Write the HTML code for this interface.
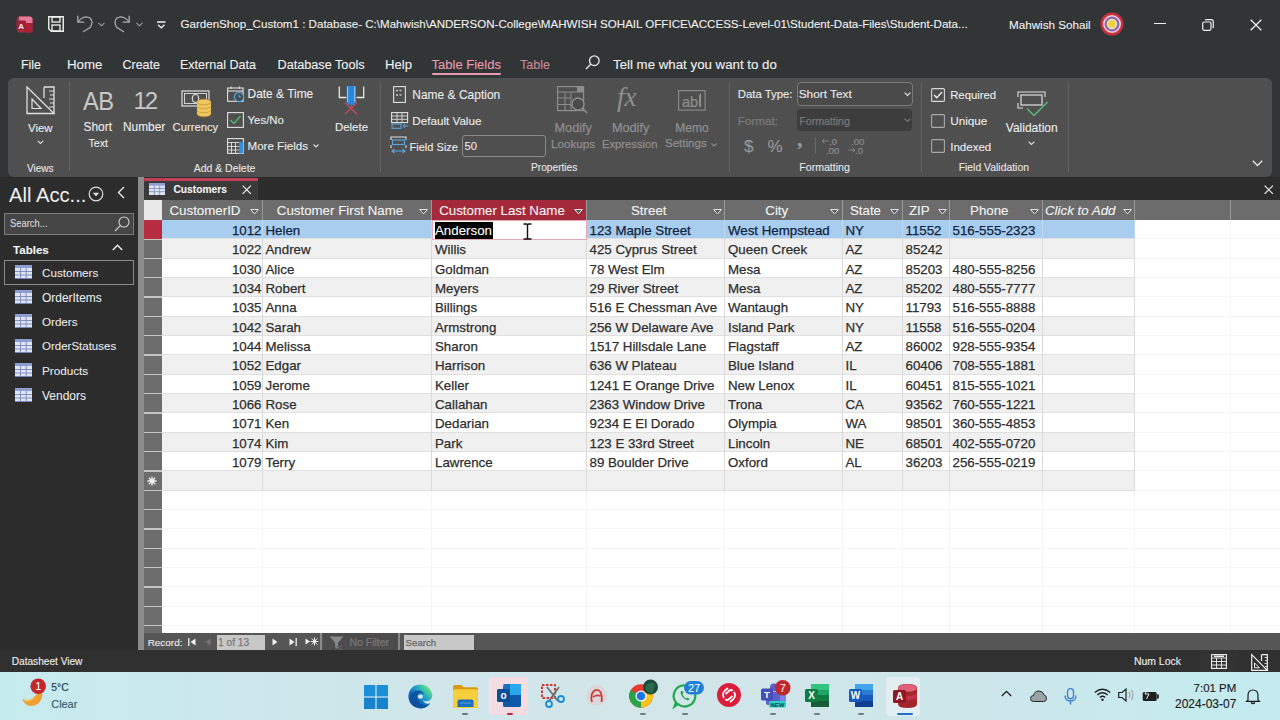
<!DOCTYPE html>
<html><head><meta charset="utf-8">
<style>
*{margin:0;padding:0;box-sizing:border-box}
html,body{width:1280px;height:720px;overflow:hidden;background:#2b2b2b;font-family:"Liberation Sans",sans-serif;}
.a{position:absolute;white-space:nowrap;line-height:1}
svg.a{overflow:visible}
</style></head><body>
<div class="a" style="left:0px;top:0px;width:1280px;height:178px;background:#323535;"></div>
<div class="a" style="left:8px;top:78px;width:1264px;height:99px;background:#4f4f4f;border-radius:6px"></div>
<div class="a" style="left:0px;top:177px;width:138px;height:473px;background:#2c2c2c;"></div>
<div class="a" style="left:138px;top:177px;width:6px;height:473px;background:#8c8c8c;"></div>
<div class="a" style="left:144px;top:177px;width:1136px;height:23px;background:#2c2c2c;"></div>
<svg class="a" style="left:15.5px;top:15.5px" width="17" height="17" viewBox="0 0 17 17"><rect x="1" y="0.5" width="15.5" height="16" rx="3" fill="#b02a40"/><path d="M3 0.5 H13.5 Q16.5 0.5 16.5 3.5 V7 Q10 9 3.5 7Z" fill="#e57b98"/><rect x="9" y="7" width="7.5" height="9.5" fill="#a72238"/><rect x="0.5" y="4.5" width="9.5" height="10" rx="1" fill="#a01f36"/><text x="5.2" y="12.8" font-size="8" font-weight="bold" fill="#fbe8ee" text-anchor="middle" font-family="Liberation Sans">A</text></svg>
<svg class="a" style="left:48px;top:16px" width="16" height="16" viewBox="0 0 16 16"><path d="M0.75 0.75H15.25V15.25H3.2L0.75 12.8Z" fill="none" stroke="#f0f0f0" stroke-width="1.4"/><rect x="4" y="1" width="8" height="5" fill="none" stroke="#f0f0f0" stroke-width="1.3"/><rect x="4" y="9" width="8" height="6" fill="none" stroke="#f0f0f0" stroke-width="1.3"/></svg>
<svg class="a" style="left:76px;top:15px" width="17" height="17" viewBox="0 0 17 17"><path d="M1.8 0.8V7.2H8.3" fill="none" stroke="#a8a8a8" stroke-width="1.3"/><path d="M2 7 Q5.5 2.2 10 1.9 Q15.5 2 16 7.5 Q16 10 14 12.5 L7 17" fill="none" stroke="#a8a8a8" stroke-width="1.3"/></svg>
<svg class="a" style="left:97.5px;top:21.5px" width="7" height="5" viewBox="0 0 7 5"><path d="M0.5 0.8L3.5 3.8L6.5 0.8" fill="none" stroke="#a0a0a0" stroke-width="1.1"/></svg>
<svg class="a" style="left:114px;top:15px" width="17" height="17" viewBox="0 0 17 17"><path d="M15.2 0.8V7.2H8.7" fill="none" stroke="#a8a8a8" stroke-width="1.3"/><path d="M15 7 Q11.5 2.2 7 1.9 Q1.5 2 1 7.5 Q1 10 3 12.5 L10 17" fill="none" stroke="#a8a8a8" stroke-width="1.3"/></svg>
<svg class="a" style="left:136px;top:21.5px" width="7" height="5" viewBox="0 0 7 5"><path d="M0.5 0.8L3.5 3.8L6.5 0.8" fill="none" stroke="#a0a0a0" stroke-width="1.1"/></svg>
<svg class="a" style="left:157px;top:20.5px" width="8.5" height="8" viewBox="0 0 8.5 8"><path d="M0 1H8.5" stroke="#e8e8e8" stroke-width="1.6"/><path d="M1 3.8L4.25 6.8L7.5 3.8" fill="none" stroke="#e8e8e8" stroke-width="1.5"/></svg>
<div class="a" style="left:180.50px;top:19.20px;font-size:11.58px;color:#f0f0f0;-webkit-text-stroke:0.1px #f0f0f0;">GardenShop_Custom1 : Database- C:\Mahwish\ANDERSON-College\MAHWISH SOHAIL OFFICE\ACCESS-Level-01\Student-Data-Files\Student-Data...</div>
<div class="a" style="left:1009.00px;top:19.42px;font-size:11.67px;color:#f0f0f0;-webkit-text-stroke:0.1px #f0f0f0;">Mahwish Sohail</div>
<svg class="a" style="left:1100px;top:12px" width="24" height="24" viewBox="0 0 24 24"><circle cx="12" cy="12" r="11.5" fill="#c9303f"/><circle cx="12" cy="12" r="9" fill="#f2d2dc"/><circle cx="12" cy="12" r="7.5" fill="#8a6aa8"/><circle cx="12" cy="12" r="5.2" fill="#f0e6f0"/><circle cx="12" cy="12" r="4" fill="#f0d23a"/></svg>
<div class="a" style="left:1154px;top:23px;width:12px;height:1.3px;background:#f0f0f0;"></div>
<svg class="a" style="left:1202px;top:19px" width="12" height="12" viewBox="0 0 12 12"><rect x="0.7" y="3" width="8.3" height="8.3" rx="1.5" fill="none" stroke="#f0f0f0" stroke-width="1.2"/><path d="M3 1.2 Q3.5 0.7 5 0.7 H9 Q11.3 0.7 11.3 3 V7 Q11.3 8.5 10.8 9" fill="none" stroke="#f0f0f0" stroke-width="1.2"/></svg>
<svg class="a" style="left:1250px;top:19px" width="12" height="12" viewBox="0 0 12 12"><path d="M0.7 0.7L11.3 11.3M11.3 0.7L0.7 11.3" stroke="#f0f0f0" stroke-width="1.3"/></svg>
<div class="a" style="left:21.00px;top:58.79px;font-size:12.41px;color:#f0f0f0;-webkit-text-stroke:0.1px #f0f0f0;">File</div>
<div class="a" style="left:67.00px;top:58.03px;font-size:13.31px;color:#f0f0f0;-webkit-text-stroke:0.1px #f0f0f0;">Home</div>
<div class="a" style="left:122.50px;top:58.73px;font-size:12.49px;color:#f0f0f0;-webkit-text-stroke:0.1px #f0f0f0;">Create</div>
<div class="a" style="left:180.00px;top:58.68px;font-size:12.54px;color:#f0f0f0;-webkit-text-stroke:0.1px #f0f0f0;">External Data</div>
<div class="a" style="left:277.50px;top:58.57px;font-size:12.68px;color:#f0f0f0;-webkit-text-stroke:0.1px #f0f0f0;">Database Tools</div>
<div class="a" style="left:385.00px;top:58.19px;font-size:13.13px;color:#f0f0f0;-webkit-text-stroke:0.1px #f0f0f0;">Help</div>
<div class="a" style="left:431.50px;top:58.27px;font-size:13.03px;color:#e79bb2;-webkit-text-stroke:0.1px #e79bb2;">Table Fields</div>
<div class="a" style="left:431.5px;top:73px;width:69.5px;height:2px;background:#e79bb2;border-radius:1px"></div>
<div class="a" style="left:520.00px;top:58.68px;font-size:12.55px;color:#c88a9e;-webkit-text-stroke:0.1px #c88a9e;">Table</div>
<svg class="a" style="left:585px;top:55px" width="15" height="15" viewBox="0 0 15 15"><circle cx="9.3" cy="5.7" r="4.8" fill="none" stroke="#e8e8e8" stroke-width="1.3"/><path d="M5.8 9.2L1 14" stroke="#e8e8e8" stroke-width="1.4"/></svg>
<div class="a" style="left:613.00px;top:58.05px;font-size:13.29px;color:#f0f0f0;-webkit-text-stroke:0.1px #f0f0f0;">Tell me what you want to do</div>
<svg class="a" style="left:26px;top:86px" width="30" height="29" viewBox="0 0 30 29"><path d="M1 1 L28 27.5 H1 Z" fill="none" stroke="#e0e0e0" stroke-width="1.3"/><path d="M6 13 L15 22.5 H6Z" fill="none" stroke="#e0e0e0" stroke-width="1.2"/><path d="M18 1 H28 V27.5" fill="none" stroke="#e0e0e0" stroke-width="1.3"/><path d="M18 1 V12" stroke="#e0e0e0" stroke-width="1.3"/><path d="M23 5H28M24 9H28M23 13H28M24 17H28M23 21H28" stroke="#e0e0e0" stroke-width="1"/></svg>
<div class="a" style="left:28.00px;top:123.35px;font-size:11.4px;color:#ececec;-webkit-text-stroke:0.1px #ececec;">View</div>
<svg class="a" style="left:37px;top:140px" width="7" height="5" viewBox="0 0 7 5"><path d="M0.8 0.8L3.5 3.5L6.2 0.8" fill="none" stroke="#e0e0e0" stroke-width="1.1"/></svg>
<div class="a" style="left:27.00px;top:163.53px;font-size:10.0px;color:#e6e6e6;-webkit-text-stroke:0.1px #e6e6e6;">Views</div>
<div class="a" style="left:69px;top:82px;width:1px;height:89px;background:#646464;"></div>
<div class="a" style="left:83px;top:88.5px;font-size:25px;color:#c8c8c8;font-weight:normal;letter-spacing:-0.5px;transform:scaleX(0.95);transform-origin:0 0">AB</div>
<div class="a" style="left:133.5px;top:88.5px;font-size:24px;color:#c8c8c8;letter-spacing:-2px">12</div>
<div class="a" style="left:83.50px;top:121.91px;font-size:11.92px;color:#ececec;-webkit-text-stroke:0.1px #ececec;">Short</div>
<div class="a" style="left:88.40px;top:137.75px;font-size:10.69px;color:#ececec;-webkit-text-stroke:0.1px #ececec;">Text</div>
<div class="a" style="left:123.00px;top:121.94px;font-size:11.89px;color:#ececec;-webkit-text-stroke:0.1px #ececec;">Number</div>
<svg class="a" style="left:181px;top:90px" width="32" height="28" viewBox="0 0 32 28"><rect x="1" y="1" width="27" height="15" fill="none" stroke="#e0e0e0" stroke-width="1.2"/><rect x="3.5" y="3.5" width="22" height="10" fill="none" stroke="#e0e0e0" stroke-width="0.9"/><ellipse cx="14.5" cy="8.5" rx="3.2" ry="4" fill="none" stroke="#e0e0e0" stroke-width="1.2"/><g fill="#f0c75e" stroke="#b08a2a" stroke-width="0.6"><ellipse cx="23" cy="24" rx="7" ry="2.8"/><rect x="16" y="19" width="14" height="5" stroke="none"/><ellipse cx="23" cy="20" rx="7" ry="2.8"/><rect x="16" y="15" width="14" height="5" stroke="none"/><ellipse cx="23" cy="16" rx="7" ry="2.8"/><rect x="16" y="11" width="14" height="5" stroke="none"/><ellipse cx="23" cy="12" rx="7" ry="2.8"/></g></svg>
<div class="a" style="left:172.50px;top:122.44px;font-size:11.29px;color:#ececec;-webkit-text-stroke:0.1px #ececec;">Currency</div>
<svg class="a" style="left:227px;top:86px" width="18" height="16" viewBox="0 0 18 16"><rect x="0.6" y="2" width="15.5" height="13.3" fill="none" stroke="#e0e0e0" stroke-width="1.1"/><path d="M0.6 5H16" stroke="#e0e0e0" stroke-width="1.1"/><path d="M4 0.5V3M12.5 0.5V3" stroke="#e0e0e0" stroke-width="1.1"/><circle cx="12" cy="11" r="4.6" fill="#4a4a4a" stroke="#5aa7e6" stroke-width="1.2"/><path d="M12 8.5V11H14" fill="none" stroke="#5aa7e6" stroke-width="1"/></svg>
<div class="a" style="left:247.50px;top:88.88px;font-size:11.96px;color:#ececec;-webkit-text-stroke:0.1px #ececec;">Date & Time</div>
<svg class="a" style="left:227px;top:112px" width="17" height="16" viewBox="0 0 17 16"><rect x="0.6" y="0.6" width="15.8" height="14.8" fill="none" stroke="#e0e0e0" stroke-width="1.1"/><path d="M3.5 8L7 11.5L13.5 4" fill="none" stroke="#4fb86a" stroke-width="1.5"/></svg>
<div class="a" style="left:247.50px;top:115.31px;font-size:11.45px;color:#ececec;-webkit-text-stroke:0.1px #ececec;">Yes/No</div>
<svg class="a" style="left:227px;top:138px" width="17" height="16" viewBox="0 0 17 16"><rect x="0.6" y="0.6" width="15.8" height="14.8" fill="none" stroke="#e0e0e0" stroke-width="1.1"/><path d="M0.6 4.5H16.4M0.6 8.5H12M0.6 12H12M4.5 4.5V15.4M8.5 4.5V15.4" stroke="#e0e0e0" stroke-width="0.9"/><rect x="12" y="4" width="4.4" height="11.4" fill="#2f8ee0"/></svg>
<div class="a" style="left:247.50px;top:141.20px;font-size:11.58px;color:#ececec;-webkit-text-stroke:0.1px #ececec;">More Fields</div>
<svg class="a" style="left:313px;top:144px" width="6" height="4" viewBox="0 0 6 4"><path d="M0.5 0.5L3 3L5.5 0.5" fill="none" stroke="#e0e0e0" stroke-width="1.1"/></svg>
<svg class="a" style="left:338px;top:86px" width="27" height="28" viewBox="0 0 27 28"><path d="M1.3 0.5V11.5H8.5M25.7 0.5V11.5H18.5" fill="none" stroke="#e6e6e6" stroke-width="1.3"/><path d="M8.7 0V17L13.2 20L17.7 17V0Z" fill="#2a86d8"/><path d="M9.6 0.5V16M16.8 0.5V16" stroke="#9fd0f8" stroke-width="1"/><path d="M7 16.5L19 28M19 16.5L7 28" stroke="#d9485e" stroke-width="1.4" opacity="0.9"/></svg>
<div class="a" style="left:335.00px;top:121.83px;font-size:11.42px;color:#ececec;-webkit-text-stroke:0.1px #ececec;">Delete</div>
<div class="a" style="left:193.70px;top:163.64px;font-size:10.47px;color:#e6e6e6;-webkit-text-stroke:0.1px #e6e6e6;">Add & Delete</div>
<div class="a" style="left:379.5px;top:82px;width:1px;height:90px;background:#646464;"></div>
<svg class="a" style="left:393px;top:86px" width="14" height="17" viewBox="0 0 14 17"><rect x="0.6" y="0.6" width="11.8" height="15.8" fill="none" stroke="#e0e0e0" stroke-width="1.1"/><path d="M3 4.5H5M3 9H5M6.5 4.5H8.5M6.5 9H8.5" stroke="#c8c8c8" stroke-width="1.6"/></svg>
<div class="a" style="left:412.30px;top:89.15px;font-size:11.99px;color:#ececec;-webkit-text-stroke:0.1px #ececec;">Name & Caption</div>
<svg class="a" style="left:391px;top:112px" width="18" height="17" viewBox="0 0 18 17"><rect x="0.6" y="0.6" width="16" height="10" fill="none" stroke="#e0e0e0" stroke-width="1.1"/><path d="M0.6 4H16.6M0.6 7.3H16.6M6 0.6V10.6M11 0.6V10.6" stroke="#e0e0e0" stroke-width="0.9"/><rect x="1" y="12" width="9" height="4.3" fill="none" stroke="#5aa7e6" stroke-width="1"/><path d="M17 14H12M14 12L12 14L14 16" fill="none" stroke="#5aa7e6" stroke-width="1"/></svg>
<div class="a" style="left:412.30px;top:115.12px;font-size:11.67px;color:#ececec;-webkit-text-stroke:0.1px #ececec;">Default Value</div>
<svg class="a" style="left:390px;top:136px" width="17" height="17" viewBox="0 0 17 17"><path d="M1 4V1H16V4M1 9V12M16 9V12" fill="none" stroke="#e0e0e0" stroke-width="1.1"/><rect x="2.5" y="4" width="12" height="4.5" fill="none" stroke="#5aa7e6" stroke-width="1.1"/><path d="M2 15H15M4.5 13L2 15L4.5 17M12.5 13L15 15L12.5 17" fill="none" stroke="#5aa7e6" stroke-width="1.1"/></svg>
<div class="a" style="left:409.50px;top:141.65px;font-size:11.05px;color:#ececec;-webkit-text-stroke:0.1px #ececec;">Field Size</div>
<div class="a" style="left:462px;top:135px;width:83.5px;height:21.7px;background:transparent;border:1px solid #8a8a8a;border-radius:3px"></div>
<div class="a" style="left:464.50px;top:141.49px;font-size:11.24px;color:#ececec;-webkit-text-stroke:0.1px #ececec;">50</div>
<svg class="a" style="left:557px;top:86px" width="32" height="31" viewBox="0 0 32 31"><rect x="0.6" y="0.6" width="26" height="24" fill="none" stroke="#8e8e8e" stroke-width="1.2"/><path d="M0.6 6H26.6M0.6 12H14M0.6 18.5H14M8 6V24.6M14 6V24.6" stroke="#8e8e8e" stroke-width="1"/><rect x="20" y="1" width="6.5" height="5" fill="#8e8e8e"/><circle cx="21" cy="18" r="6" fill="#4a4a4a" stroke="#8e8e8e" stroke-width="1.3"/><path d="M25.3 22.3L30 27" stroke="#8e8e8e" stroke-width="1.6"/></svg>
<div class="a" style="left:554.50px;top:121.72px;font-size:12.73px;color:#8e8e8e;-webkit-text-stroke:0.25px #8e8e8e;">Modify</div>
<div class="a" style="left:551.00px;top:138.15px;font-size:11.64px;color:#8e8e8e;-webkit-text-stroke:0.25px #8e8e8e;">Lookups</div>
<div class="a" style="left:617px;top:84px;font-size:27px;color:#8e8e8e;font-family:'Liberation Serif',serif;font-style:italic">fx</div>
<div class="a" style="left:612.00px;top:121.78px;font-size:12.66px;color:#8e8e8e;-webkit-text-stroke:0.25px #8e8e8e;">Modify</div>
<div class="a" style="left:602.00px;top:138.50px;font-size:11.22px;color:#8e8e8e;-webkit-text-stroke:0.25px #8e8e8e;">Expression</div>
<svg class="a" style="left:678px;top:90px" width="28" height="21" viewBox="0 0 28 21"><rect x="0.6" y="0.6" width="26.5" height="19.5" fill="none" stroke="#8e8e8e" stroke-width="1.1"/><path d="M22.5 3.5V17" stroke="#8e8e8e" stroke-width="1.1"/></svg>
<div class="a" style="left:682.00px;top:94.73px;font-size:14.5px;color:#8e8e8e;-webkit-text-stroke:0.25px #8e8e8e;">ab</div>
<div class="a" style="left:699px;top:95px;width:1.1px;height:12px;background:#8e8e8e;"></div>
<div class="a" style="left:675.30px;top:122.33px;font-size:12.02px;color:#8e8e8e;-webkit-text-stroke:0.25px #8e8e8e;">Memo</div>
<div class="a" style="left:665.00px;top:138.23px;font-size:11.54px;color:#8e8e8e;-webkit-text-stroke:0.25px #8e8e8e;">Settings</div>
<svg class="a" style="left:711px;top:143px" width="6" height="4" viewBox="0 0 6 4"><path d="M0.5 0.5L3 3L5.5 0.5" fill="none" stroke="#8e8e8e" stroke-width="1.1"/></svg>
<div class="a" style="left:531.00px;top:162.68px;font-size:10.18px;color:#e6e6e6;-webkit-text-stroke:0.1px #e6e6e6;">Properties</div>
<div class="a" style="left:728.5px;top:82px;width:1px;height:90px;background:#646464;"></div>
<div class="a" style="left:737.80px;top:89.19px;font-size:11.35px;color:#ececec;-webkit-text-stroke:0.1px #ececec;">Data Type:</div>
<div class="a" style="left:796.6px;top:82px;width:116.2px;height:24px;background:#4a4a4a;border:1px solid #7a7a7a;border-radius:4px"></div>
<div class="a" style="left:798.70px;top:88.78px;font-size:11.84px;color:#ececec;-webkit-text-stroke:0.1px #ececec;">Short Text</div>
<svg class="a" style="left:904px;top:92px" width="7" height="5" viewBox="0 0 7 5"><path d="M0.6 0.6L3.5 3.5L6.4 0.6" fill="none" stroke="#e0e0e0" stroke-width="1.2"/></svg>
<div class="a" style="left:737.80px;top:114.92px;font-size:11.67px;color:#7a7a7a;-webkit-text-stroke:0.25px #7a7a7a;">Format:</div>
<div class="a" style="left:797.4px;top:108.6px;width:114.6px;height:22.2px;background:#3d3d3d;border-radius:4px"></div>
<div class="a" style="left:799.30px;top:115.84px;font-size:10.59px;color:#777777;-webkit-text-stroke:0.25px #777777;">Formatting</div>
<svg class="a" style="left:904px;top:118px" width="7" height="5" viewBox="0 0 7 5"><path d="M0.6 0.6L3.5 3.5L6.4 0.6" fill="none" stroke="#777" stroke-width="1.2"/></svg>
<div class="a" style="left:744.00px;top:137.61px;font-size:17px;color:#9a9a9a;-webkit-text-stroke:0.1px #9a9a9a;">$</div>
<div class="a" style="left:767.50px;top:137.61px;font-size:17px;color:#9a9a9a;-webkit-text-stroke:0.1px #9a9a9a;">%</div>
<div class="a" style="left:797px;top:128px;font-size:22px;color:#9a9a9a;font-weight:bold;font-family:'Liberation Serif',serif">,</div>
<div class="a" style="left:815px;top:138px;width:1px;height:16px;background:#6a6a6a;"></div>
<div class="a" style="left:829.00px;top:136.96px;font-size:9.5px;color:#8a8a8a;-webkit-text-stroke:0.25px #8a8a8a;">.0</div>
<div class="a" style="left:826.00px;top:145.96px;font-size:9.5px;color:#8a8a8a;-webkit-text-stroke:0.25px #8a8a8a;">.00</div>
<svg class="a" style="left:821px;top:138px" width="8" height="6" viewBox="0 0 8 6"><path d="M7.5 3H1M3.5 0.8L1 3L3.5 5.2" fill="none" stroke="#8a8a8a" stroke-width="0.9"/></svg>
<div class="a" style="left:851.00px;top:136.96px;font-size:9.5px;color:#8a8a8a;-webkit-text-stroke:0.25px #8a8a8a;">.00</div>
<div class="a" style="left:855.00px;top:145.96px;font-size:9.5px;color:#8a8a8a;-webkit-text-stroke:0.25px #8a8a8a;">.0</div>
<svg class="a" style="left:848px;top:147px" width="8" height="6" viewBox="0 0 8 6"><path d="M0.5 3H7M4.5 0.8L7 3L4.5 5.2" fill="none" stroke="#8a8a8a" stroke-width="0.9"/></svg>
<div class="a" style="left:799.30px;top:162.34px;font-size:10.59px;color:#e6e6e6;-webkit-text-stroke:0.1px #e6e6e6;">Formatting</div>
<div class="a" style="left:921px;top:82px;width:1px;height:90px;background:#646464;"></div>
<svg class="a" style="left:931px;top:87.6px" width="14" height="14" viewBox="0 0 14 14"><rect x="0.6" y="0.6" width="12.8" height="12.8" rx="1" fill="none" stroke="#d8d8d8" stroke-width="1.1"/><path d="M3 7L5.8 9.8L11 4" fill="none" stroke="#f0f0f0" stroke-width="1.3"/></svg>
<div class="a" style="left:950.20px;top:89.70px;font-size:11.34px;color:#ececec;-webkit-text-stroke:0.1px #ececec;">Required</div>
<svg class="a" style="left:931px;top:113.5px" width="14" height="14" viewBox="0 0 14 14"><rect x="0.6" y="0.6" width="12.8" height="12.8" rx="1" fill="none" stroke="#a8a8a8" stroke-width="1.1"/></svg>
<div class="a" style="left:950.20px;top:115.36px;font-size:11.74px;color:#ececec;-webkit-text-stroke:0.1px #ececec;">Unique</div>
<svg class="a" style="left:931px;top:139.3px" width="14" height="14" viewBox="0 0 14 14"><rect x="0.6" y="0.6" width="12.8" height="12.8" rx="1" fill="none" stroke="#a8a8a8" stroke-width="1.1"/></svg>
<div class="a" style="left:950.20px;top:141.52px;font-size:11.55px;color:#ececec;-webkit-text-stroke:0.1px #ececec;">Indexed</div>
<svg class="a" style="left:1017px;top:91px" width="32" height="26" viewBox="0 0 32 26"><path d="M1 6V1H28V6M1 12V17H6" fill="none" stroke="#e0e0e0" stroke-width="1.1"/><rect x="4" y="4" width="21" height="10" fill="none" stroke="#e0e0e0" stroke-width="1.2"/><path d="M10 17.5L17 24.5L30.5 11" fill="none" stroke="#5cb87a" stroke-width="1.5"/></svg>
<div class="a" style="left:1005.80px;top:122.33px;font-size:12.02px;color:#ececec;-webkit-text-stroke:0.1px #ececec;">Validation</div>
<svg class="a" style="left:1028px;top:141px" width="7" height="5" viewBox="0 0 7 5"><path d="M0.6 0.6L3.5 3.5L6.4 0.6" fill="none" stroke="#e0e0e0" stroke-width="1.1"/></svg>
<div class="a" style="left:958.70px;top:162.50px;font-size:10.4px;color:#e6e6e6;-webkit-text-stroke:0.1px #e6e6e6;">Field Validation</div>
<div class="a" style="left:1067.8px;top:82px;width:1px;height:90px;background:#646464;"></div>
<svg class="a" style="left:1252px;top:160px" width="11" height="7" viewBox="0 0 11 7"><path d="M0.8 0.8L5.5 5.5L10.2 0.8" fill="none" stroke="#e8e8e8" stroke-width="1.3"/></svg>
<div class="a" style="left:9.00px;top:184.89px;font-size:20.21px;color:#f0f0f0;">All Acc...</div>
<svg class="a" style="left:88px;top:186px" width="16" height="16" viewBox="0 0 16 16"><circle cx="8" cy="8" r="6.8" fill="none" stroke="#e0e0e0" stroke-width="1.2"/><path d="M4.8 6.8H11.2L8 10.2Z" fill="#e8e8e8"/></svg>
<svg class="a" style="left:117px;top:186px" width="8" height="13" viewBox="0 0 8 13"><path d="M7 1L1.5 6.5L7 12" fill="none" stroke="#e8e8e8" stroke-width="1.4"/></svg>
<div class="a" style="left:4px;top:212.5px;width:130px;height:22.5px;background:#454545;border:1px solid #7c7c7c"></div>
<div class="a" style="left:10.00px;top:218.23px;font-size:11.3px;color:#dcdcdc;-webkit-text-stroke:0.1px #dcdcdc;transform:scaleX(0.83);transform-origin:0 0;">Search...</div>
<svg class="a" style="left:114px;top:216px" width="16" height="15" viewBox="0 0 16 15"><circle cx="10" cy="6" r="5" fill="none" stroke="#d0d0d0" stroke-width="1.1"/><path d="M6.3 9.7L1 15" stroke="#d0d0d0" stroke-width="1.2"/></svg>
<div class="a" style="left:13.00px;top:245.21px;font-size:11.57px;color:#f4f4f4;-webkit-text-stroke:0.1px #f4f4f4;font-weight:bold;">Tables</div>
<svg class="a" style="left:112px;top:244px" width="11" height="7" viewBox="0 0 11 7"><path d="M0.8 6L5.5 1.3L10.2 6" fill="none" stroke="#f0f0f0" stroke-width="1.4"/></svg>
<div class="a" style="left:4px;top:260px;width:130px;height:24.7px;background:transparent;border:1px solid #8a8a8a"></div>
<svg class="a" style="left:15px;top:264.9px" width="17" height="14" viewBox="0 0 17 14"><rect x="0" y="0" width="17" height="14" fill="#dfe4f2"/><rect x="0" y="0" width="17" height="3" fill="#8e9ed0"/><path d="M0 6.5H17M0 10H17M5.5 3V14M11.2 3V14" stroke="#7a88b8" stroke-width="0.9"/><rect x="0" y="13" width="17" height="1" fill="#7a88b8"/></svg>
<div class="a" style="left:42.00px;top:266.84px;font-size:11.65px;color:#ececec;-webkit-text-stroke:0.05px #ececec;">Customers</div>
<svg class="a" style="left:15px;top:289.5px" width="17" height="14" viewBox="0 0 17 14"><rect x="0" y="0" width="17" height="14" fill="#dfe4f2"/><rect x="0" y="0" width="17" height="3" fill="#8e9ed0"/><path d="M0 6.5H17M0 10H17M5.5 3V14M11.2 3V14" stroke="#7a88b8" stroke-width="0.9"/><rect x="0" y="13" width="17" height="1" fill="#7a88b8"/></svg>
<div class="a" style="left:42.00px;top:292.99px;font-size:11.94px;color:#ececec;-webkit-text-stroke:0.05px #ececec;">OrderItems</div>
<svg class="a" style="left:15px;top:314.09999999999997px" width="17" height="14" viewBox="0 0 17 14"><rect x="0" y="0" width="17" height="14" fill="#dfe4f2"/><rect x="0" y="0" width="17" height="3" fill="#8e9ed0"/><path d="M0 6.5H17M0 10H17M5.5 3V14M11.2 3V14" stroke="#7a88b8" stroke-width="0.9"/><rect x="0" y="13" width="17" height="1" fill="#7a88b8"/></svg>
<div class="a" style="left:42.00px;top:316.06px;font-size:11.62px;color:#ececec;-webkit-text-stroke:0.05px #ececec;">Orders</div>
<svg class="a" style="left:15px;top:338.7px" width="17" height="14" viewBox="0 0 17 14"><rect x="0" y="0" width="17" height="14" fill="#dfe4f2"/><rect x="0" y="0" width="17" height="3" fill="#8e9ed0"/><path d="M0 6.5H17M0 10H17M5.5 3V14M11.2 3V14" stroke="#7a88b8" stroke-width="0.9"/><rect x="0" y="13" width="17" height="1" fill="#7a88b8"/></svg>
<div class="a" style="left:42.00px;top:340.76px;font-size:11.51px;color:#ececec;-webkit-text-stroke:0.05px #ececec;">OrderStatuses</div>
<svg class="a" style="left:15px;top:363.29999999999995px" width="17" height="14" viewBox="0 0 17 14"><rect x="0" y="0" width="17" height="14" fill="#dfe4f2"/><rect x="0" y="0" width="17" height="3" fill="#8e9ed0"/><path d="M0 6.5H17M0 10H17M5.5 3V14M11.2 3V14" stroke="#7a88b8" stroke-width="0.9"/><rect x="0" y="13" width="17" height="1" fill="#7a88b8"/></svg>
<div class="a" style="left:42.00px;top:365.19px;font-size:11.71px;color:#ececec;-webkit-text-stroke:0.05px #ececec;">Products</div>
<svg class="a" style="left:15px;top:387.9px" width="17" height="14" viewBox="0 0 17 14"><rect x="0" y="0" width="17" height="14" fill="#dfe4f2"/><rect x="0" y="0" width="17" height="3" fill="#8e9ed0"/><path d="M0 6.5H17M0 10H17M5.5 3V14M11.2 3V14" stroke="#7a88b8" stroke-width="0.9"/><rect x="0" y="13" width="17" height="1" fill="#7a88b8"/></svg>
<div class="a" style="left:42.00px;top:389.55px;font-size:11.99px;color:#ececec;-webkit-text-stroke:0.05px #ececec;">Vendors</div>
<div class="a" style="left:144px;top:178px;width:114px;height:22px;background:#3a3a3a;"></div>
<div class="a" style="left:144px;top:178px;width:114px;height:3px;background:#c23f5a;"></div>
<svg class="a" style="left:149px;top:183px" width="16" height="12" viewBox="0 0 16 12"><rect x="0" y="0" width="16" height="12" fill="#dfe4f2"/><rect x="0" y="0" width="16" height="2.6" fill="#8e9ed0"/><path d="M0 5.5H16M0 8.7H16M5.3 2.6V12M10.7 2.6V12" stroke="#7a88b8" stroke-width="0.8"/></svg>
<div class="a" style="left:173.40px;top:185.33px;font-size:10.24px;color:#f4f4f4;-webkit-text-stroke:0.1px #f4f4f4;font-weight:bold;">Customers</div>
<svg class="a" style="left:241.5px;top:185px" width="9.5" height="9.5" viewBox="0 0 9.5 9.5"><path d="M0.6 0.6L8.9 8.9M8.9 0.6L0.6 8.9" stroke="#f0f0f0" stroke-width="1.2"/></svg>
<svg class="a" style="left:1264px;top:185px" width="9.5" height="9.5" viewBox="0 0 9.5 9.5"><path d="M0.6 0.6L8.9 8.9M8.9 0.6L0.6 8.9" stroke="#f0f0f0" stroke-width="1.2"/></svg>
<div class="a" style="left:144px;top:200px;width:1136px;height:433px;background:#ffffff;"></div>
<div class="a" style="left:161.5px;top:200px;width:1118.5px;height:20px;background:#6c6c6c;"></div>
<div class="a" style="left:144px;top:200px;width:17.5px;height:20px;background:#e9e9e9;"></div>
<div class="a" style="left:161.5px;top:238.33px;width:1118.5px;height:1px;background:#f5f5f5;"></div>
<div class="a" style="left:161.5px;top:257.67px;width:1118.5px;height:1px;background:#f5f5f5;"></div>
<div class="a" style="left:161.5px;top:277.0px;width:1118.5px;height:1px;background:#f5f5f5;"></div>
<div class="a" style="left:161.5px;top:296.33px;width:1118.5px;height:1px;background:#f5f5f5;"></div>
<div class="a" style="left:161.5px;top:315.66px;width:1118.5px;height:1px;background:#f5f5f5;"></div>
<div class="a" style="left:161.5px;top:335.0px;width:1118.5px;height:1px;background:#f5f5f5;"></div>
<div class="a" style="left:161.5px;top:354.33px;width:1118.5px;height:1px;background:#f5f5f5;"></div>
<div class="a" style="left:161.5px;top:373.66px;width:1118.5px;height:1px;background:#f5f5f5;"></div>
<div class="a" style="left:161.5px;top:393.0px;width:1118.5px;height:1px;background:#f5f5f5;"></div>
<div class="a" style="left:161.5px;top:412.33px;width:1118.5px;height:1px;background:#f5f5f5;"></div>
<div class="a" style="left:161.5px;top:431.66px;width:1118.5px;height:1px;background:#f5f5f5;"></div>
<div class="a" style="left:161.5px;top:451.0px;width:1118.5px;height:1px;background:#f5f5f5;"></div>
<div class="a" style="left:161.5px;top:470.33px;width:1118.5px;height:1px;background:#f5f5f5;"></div>
<div class="a" style="left:161.5px;top:489.66px;width:1118.5px;height:1px;background:#f5f5f5;"></div>
<div class="a" style="left:161.5px;top:509.0px;width:1118.5px;height:1px;background:#f5f5f5;"></div>
<div class="a" style="left:161.5px;top:528.33px;width:1118.5px;height:1px;background:#f5f5f5;"></div>
<div class="a" style="left:161.5px;top:547.66px;width:1118.5px;height:1px;background:#f5f5f5;"></div>
<div class="a" style="left:161.5px;top:566.99px;width:1118.5px;height:1px;background:#f5f5f5;"></div>
<div class="a" style="left:161.5px;top:586.33px;width:1118.5px;height:1px;background:#f5f5f5;"></div>
<div class="a" style="left:161.5px;top:605.66px;width:1118.5px;height:1px;background:#f5f5f5;"></div>
<div class="a" style="left:161.5px;top:624.99px;width:1118.5px;height:1px;background:#f5f5f5;"></div>
<div class="a" style="left:261.5px;top:220px;width:1px;height:413px;background:#f4f4f4;"></div>
<div class="a" style="left:430.5px;top:220px;width:1px;height:413px;background:#f4f4f4;"></div>
<div class="a" style="left:585.5px;top:220px;width:1px;height:413px;background:#f4f4f4;"></div>
<div class="a" style="left:724px;top:220px;width:1px;height:413px;background:#f4f4f4;"></div>
<div class="a" style="left:841.5px;top:220px;width:1px;height:413px;background:#f4f4f4;"></div>
<div class="a" style="left:901.5px;top:220px;width:1px;height:413px;background:#f4f4f4;"></div>
<div class="a" style="left:949px;top:220px;width:1px;height:413px;background:#f4f4f4;"></div>
<div class="a" style="left:1041.5px;top:220px;width:1px;height:413px;background:#f4f4f4;"></div>
<div class="a" style="left:1134.3px;top:220px;width:1px;height:413px;background:#f4f4f4;"></div>
<div class="a" style="left:1230.3px;top:220px;width:1px;height:413px;background:#f4f4f4;"></div>
<div class="a" style="left:161.5px;top:220.0px;width:973.8px;height:19.33px;background:#a9cdef;"></div>
<div class="a" style="left:161.5px;top:238.33px;width:973.8px;height:1px;background:#e0e0e0;"></div>
<div class="a" style="left:161.5px;top:239.33px;width:973.8px;height:19.33px;background:#f0f0f0;"></div>
<div class="a" style="left:161.5px;top:257.67px;width:973.8px;height:1px;background:#e0e0e0;"></div>
<div class="a" style="left:161.5px;top:258.67px;width:973.8px;height:19.33px;background:#ffffff;"></div>
<div class="a" style="left:161.5px;top:277.0px;width:973.8px;height:1px;background:#e0e0e0;"></div>
<div class="a" style="left:161.5px;top:278.0px;width:973.8px;height:19.33px;background:#f0f0f0;"></div>
<div class="a" style="left:161.5px;top:296.33px;width:973.8px;height:1px;background:#e0e0e0;"></div>
<div class="a" style="left:161.5px;top:297.33px;width:973.8px;height:19.33px;background:#ffffff;"></div>
<div class="a" style="left:161.5px;top:315.66px;width:973.8px;height:1px;background:#e0e0e0;"></div>
<div class="a" style="left:161.5px;top:316.66px;width:973.8px;height:19.33px;background:#f0f0f0;"></div>
<div class="a" style="left:161.5px;top:335.0px;width:973.8px;height:1px;background:#e0e0e0;"></div>
<div class="a" style="left:161.5px;top:336.0px;width:973.8px;height:19.33px;background:#ffffff;"></div>
<div class="a" style="left:161.5px;top:354.33px;width:973.8px;height:1px;background:#e0e0e0;"></div>
<div class="a" style="left:161.5px;top:355.33px;width:973.8px;height:19.33px;background:#f0f0f0;"></div>
<div class="a" style="left:161.5px;top:373.66px;width:973.8px;height:1px;background:#e0e0e0;"></div>
<div class="a" style="left:161.5px;top:374.66px;width:973.8px;height:19.33px;background:#ffffff;"></div>
<div class="a" style="left:161.5px;top:393.0px;width:973.8px;height:1px;background:#e0e0e0;"></div>
<div class="a" style="left:161.5px;top:394.0px;width:973.8px;height:19.33px;background:#f0f0f0;"></div>
<div class="a" style="left:161.5px;top:412.33px;width:973.8px;height:1px;background:#e0e0e0;"></div>
<div class="a" style="left:161.5px;top:413.33px;width:973.8px;height:19.33px;background:#ffffff;"></div>
<div class="a" style="left:161.5px;top:431.66px;width:973.8px;height:1px;background:#e0e0e0;"></div>
<div class="a" style="left:161.5px;top:432.66px;width:973.8px;height:19.33px;background:#f0f0f0;"></div>
<div class="a" style="left:161.5px;top:451.0px;width:973.8px;height:1px;background:#e0e0e0;"></div>
<div class="a" style="left:161.5px;top:452.0px;width:973.8px;height:19.33px;background:#ffffff;"></div>
<div class="a" style="left:161.5px;top:470.33px;width:973.8px;height:1px;background:#e0e0e0;"></div>
<div class="a" style="left:161.5px;top:471.33px;width:973.8px;height:19.33px;background:#f0f0f0;"></div>
<div class="a" style="left:161.5px;top:489.66px;width:973.8px;height:1px;background:#e0e0e0;"></div>
<div class="a" style="left:261.5px;top:220px;width:1px;height:270.7px;background:#dadada;"></div>
<div class="a" style="left:430.5px;top:220px;width:1px;height:270.7px;background:#dadada;"></div>
<div class="a" style="left:585.5px;top:220px;width:1px;height:270.7px;background:#dadada;"></div>
<div class="a" style="left:724px;top:220px;width:1px;height:270.7px;background:#dadada;"></div>
<div class="a" style="left:841.5px;top:220px;width:1px;height:270.7px;background:#dadada;"></div>
<div class="a" style="left:901.5px;top:220px;width:1px;height:270.7px;background:#dadada;"></div>
<div class="a" style="left:949px;top:220px;width:1px;height:270.7px;background:#dadada;"></div>
<div class="a" style="left:1041.5px;top:220px;width:1px;height:270.7px;background:#dadada;"></div>
<div class="a" style="left:1134.3px;top:220px;width:1px;height:270.7px;background:#dadada;"></div>
<div class="a" style="left:261.5px;top:220px;width:1px;height:19.3px;background:#bcd7f0;"></div>
<div class="a" style="left:430.5px;top:220px;width:1px;height:19.3px;background:#bcd7f0;"></div>
<div class="a" style="left:585.5px;top:220px;width:1px;height:19.3px;background:#bcd7f0;"></div>
<div class="a" style="left:724px;top:220px;width:1px;height:19.3px;background:#bcd7f0;"></div>
<div class="a" style="left:841.5px;top:220px;width:1px;height:19.3px;background:#bcd7f0;"></div>
<div class="a" style="left:901.5px;top:220px;width:1px;height:19.3px;background:#bcd7f0;"></div>
<div class="a" style="left:949px;top:220px;width:1px;height:19.3px;background:#bcd7f0;"></div>
<div class="a" style="left:1041.5px;top:220px;width:1px;height:19.3px;background:#bcd7f0;"></div>
<div class="a" style="left:1134.3px;top:220px;width:1px;height:19.3px;background:#bcd7f0;"></div>
<div class="a" style="left:431.5px;top:220px;width:155px;height:20.3px;background:#ffffff;border:1px solid #e3a7b5"></div>
<div class="a" style="left:231.92px;top:223.94px;font-size:13.3px;color:#10243e;-webkit-text-stroke:0.25px #10243e;">1012</div>
<div class="a" style="left:265.50px;top:223.94px;font-size:13.3px;color:#10243e;-webkit-text-stroke:0.25px #10243e;">Helen</div>
<div class="a" style="left:434.9px;top:221.6px;width:58.3px;height:17.2px;background:#000000;"></div>
<div class="a" style="left:435.00px;top:223.94px;font-size:13.3px;color:#ffffff;-webkit-text-stroke:0.1px #ffffff;">Anderson</div>
<div class="a" style="left:589.50px;top:223.94px;font-size:13.3px;color:#10243e;-webkit-text-stroke:0.25px #10243e;">123 Maple Street</div>
<div class="a" style="left:728.00px;top:223.94px;font-size:13.3px;color:#10243e;-webkit-text-stroke:0.25px #10243e;">West Hempstead</div>
<div class="a" style="left:845.50px;top:223.94px;font-size:13.3px;color:#10243e;-webkit-text-stroke:0.25px #10243e;">NY</div>
<div class="a" style="left:905.50px;top:223.94px;font-size:13.3px;color:#10243e;-webkit-text-stroke:0.25px #10243e;">11552</div>
<div class="a" style="left:952.50px;top:223.94px;font-size:13.3px;color:#10243e;-webkit-text-stroke:0.25px #10243e;">516-555-2323</div>
<div class="a" style="left:231.92px;top:243.27px;font-size:13.3px;color:#2e2e2e;-webkit-text-stroke:0.25px #2e2e2e;">1022</div>
<div class="a" style="left:265.50px;top:243.27px;font-size:13.3px;color:#2e2e2e;-webkit-text-stroke:0.25px #2e2e2e;">Andrew</div>
<div class="a" style="left:435.00px;top:243.27px;font-size:13.3px;color:#2e2e2e;-webkit-text-stroke:0.25px #2e2e2e;">Willis</div>
<div class="a" style="left:589.50px;top:243.27px;font-size:13.3px;color:#2e2e2e;-webkit-text-stroke:0.25px #2e2e2e;">425 Cyprus Street</div>
<div class="a" style="left:728.00px;top:243.27px;font-size:13.3px;color:#2e2e2e;-webkit-text-stroke:0.25px #2e2e2e;">Queen Creek</div>
<div class="a" style="left:845.50px;top:243.27px;font-size:13.3px;color:#2e2e2e;-webkit-text-stroke:0.25px #2e2e2e;">AZ</div>
<div class="a" style="left:905.50px;top:243.27px;font-size:13.3px;color:#2e2e2e;-webkit-text-stroke:0.25px #2e2e2e;">85242</div>
<div class="a" style="left:952.50px;top:243.27px;font-size:13.3px;color:#2e2e2e;-webkit-text-stroke:0.25px #2e2e2e;"></div>
<div class="a" style="left:231.92px;top:262.61px;font-size:13.3px;color:#2e2e2e;-webkit-text-stroke:0.25px #2e2e2e;">1030</div>
<div class="a" style="left:265.50px;top:262.61px;font-size:13.3px;color:#2e2e2e;-webkit-text-stroke:0.25px #2e2e2e;">Alice</div>
<div class="a" style="left:435.00px;top:262.61px;font-size:13.3px;color:#2e2e2e;-webkit-text-stroke:0.25px #2e2e2e;">Goldman</div>
<div class="a" style="left:589.50px;top:262.61px;font-size:13.3px;color:#2e2e2e;-webkit-text-stroke:0.25px #2e2e2e;">78 West Elm</div>
<div class="a" style="left:728.00px;top:262.61px;font-size:13.3px;color:#2e2e2e;-webkit-text-stroke:0.25px #2e2e2e;">Mesa</div>
<div class="a" style="left:845.50px;top:262.61px;font-size:13.3px;color:#2e2e2e;-webkit-text-stroke:0.25px #2e2e2e;">AZ</div>
<div class="a" style="left:905.50px;top:262.61px;font-size:13.3px;color:#2e2e2e;-webkit-text-stroke:0.25px #2e2e2e;">85203</div>
<div class="a" style="left:952.50px;top:262.61px;font-size:13.3px;color:#2e2e2e;-webkit-text-stroke:0.25px #2e2e2e;">480-555-8256</div>
<div class="a" style="left:231.92px;top:281.94px;font-size:13.3px;color:#2e2e2e;-webkit-text-stroke:0.25px #2e2e2e;">1034</div>
<div class="a" style="left:265.50px;top:281.94px;font-size:13.3px;color:#2e2e2e;-webkit-text-stroke:0.25px #2e2e2e;">Robert</div>
<div class="a" style="left:435.00px;top:281.94px;font-size:13.3px;color:#2e2e2e;-webkit-text-stroke:0.25px #2e2e2e;">Meyers</div>
<div class="a" style="left:589.50px;top:281.94px;font-size:13.3px;color:#2e2e2e;-webkit-text-stroke:0.25px #2e2e2e;">29 River Street</div>
<div class="a" style="left:728.00px;top:281.94px;font-size:13.3px;color:#2e2e2e;-webkit-text-stroke:0.25px #2e2e2e;">Mesa</div>
<div class="a" style="left:845.50px;top:281.94px;font-size:13.3px;color:#2e2e2e;-webkit-text-stroke:0.25px #2e2e2e;">AZ</div>
<div class="a" style="left:905.50px;top:281.94px;font-size:13.3px;color:#2e2e2e;-webkit-text-stroke:0.25px #2e2e2e;">85202</div>
<div class="a" style="left:952.50px;top:281.94px;font-size:13.3px;color:#2e2e2e;-webkit-text-stroke:0.25px #2e2e2e;">480-555-7777</div>
<div class="a" style="left:231.92px;top:301.27px;font-size:13.3px;color:#2e2e2e;-webkit-text-stroke:0.25px #2e2e2e;">1035</div>
<div class="a" style="left:265.50px;top:301.27px;font-size:13.3px;color:#2e2e2e;-webkit-text-stroke:0.25px #2e2e2e;">Anna</div>
<div class="a" style="left:435.00px;top:301.27px;font-size:13.3px;color:#2e2e2e;-webkit-text-stroke:0.25px #2e2e2e;">Billings</div>
<div class="a" style="left:589.50px;top:301.27px;font-size:13.3px;color:#2e2e2e;-webkit-text-stroke:0.25px #2e2e2e;">516 E Chessman Ave</div>
<div class="a" style="left:728.00px;top:301.27px;font-size:13.3px;color:#2e2e2e;-webkit-text-stroke:0.25px #2e2e2e;">Wantaugh</div>
<div class="a" style="left:845.50px;top:301.27px;font-size:13.3px;color:#2e2e2e;-webkit-text-stroke:0.25px #2e2e2e;">NY</div>
<div class="a" style="left:905.50px;top:301.27px;font-size:13.3px;color:#2e2e2e;-webkit-text-stroke:0.25px #2e2e2e;">11793</div>
<div class="a" style="left:952.50px;top:301.27px;font-size:13.3px;color:#2e2e2e;-webkit-text-stroke:0.25px #2e2e2e;">516-555-8888</div>
<div class="a" style="left:231.92px;top:320.61px;font-size:13.3px;color:#2e2e2e;-webkit-text-stroke:0.25px #2e2e2e;">1042</div>
<div class="a" style="left:265.50px;top:320.61px;font-size:13.3px;color:#2e2e2e;-webkit-text-stroke:0.25px #2e2e2e;">Sarah</div>
<div class="a" style="left:435.00px;top:320.61px;font-size:13.3px;color:#2e2e2e;-webkit-text-stroke:0.25px #2e2e2e;">Armstrong</div>
<div class="a" style="left:589.50px;top:320.61px;font-size:13.3px;color:#2e2e2e;-webkit-text-stroke:0.25px #2e2e2e;">256 W Delaware Ave</div>
<div class="a" style="left:728.00px;top:320.61px;font-size:13.3px;color:#2e2e2e;-webkit-text-stroke:0.25px #2e2e2e;">Island Park</div>
<div class="a" style="left:845.50px;top:320.61px;font-size:13.3px;color:#2e2e2e;-webkit-text-stroke:0.25px #2e2e2e;">NY</div>
<div class="a" style="left:905.50px;top:320.61px;font-size:13.3px;color:#2e2e2e;-webkit-text-stroke:0.25px #2e2e2e;">11558</div>
<div class="a" style="left:952.50px;top:320.61px;font-size:13.3px;color:#2e2e2e;-webkit-text-stroke:0.25px #2e2e2e;">516-555-0204</div>
<div class="a" style="left:231.92px;top:339.94px;font-size:13.3px;color:#2e2e2e;-webkit-text-stroke:0.25px #2e2e2e;">1044</div>
<div class="a" style="left:265.50px;top:339.94px;font-size:13.3px;color:#2e2e2e;-webkit-text-stroke:0.25px #2e2e2e;">Melissa</div>
<div class="a" style="left:435.00px;top:339.94px;font-size:13.3px;color:#2e2e2e;-webkit-text-stroke:0.25px #2e2e2e;">Sharon</div>
<div class="a" style="left:589.50px;top:339.94px;font-size:13.3px;color:#2e2e2e;-webkit-text-stroke:0.25px #2e2e2e;">1517 Hillsdale Lane</div>
<div class="a" style="left:728.00px;top:339.94px;font-size:13.3px;color:#2e2e2e;-webkit-text-stroke:0.25px #2e2e2e;">Flagstaff</div>
<div class="a" style="left:845.50px;top:339.94px;font-size:13.3px;color:#2e2e2e;-webkit-text-stroke:0.25px #2e2e2e;">AZ</div>
<div class="a" style="left:905.50px;top:339.94px;font-size:13.3px;color:#2e2e2e;-webkit-text-stroke:0.25px #2e2e2e;">86002</div>
<div class="a" style="left:952.50px;top:339.94px;font-size:13.3px;color:#2e2e2e;-webkit-text-stroke:0.25px #2e2e2e;">928-555-9354</div>
<div class="a" style="left:231.92px;top:359.27px;font-size:13.3px;color:#2e2e2e;-webkit-text-stroke:0.25px #2e2e2e;">1052</div>
<div class="a" style="left:265.50px;top:359.27px;font-size:13.3px;color:#2e2e2e;-webkit-text-stroke:0.25px #2e2e2e;">Edgar</div>
<div class="a" style="left:435.00px;top:359.27px;font-size:13.3px;color:#2e2e2e;-webkit-text-stroke:0.25px #2e2e2e;">Harrison</div>
<div class="a" style="left:589.50px;top:359.27px;font-size:13.3px;color:#2e2e2e;-webkit-text-stroke:0.25px #2e2e2e;">636 W Plateau</div>
<div class="a" style="left:728.00px;top:359.27px;font-size:13.3px;color:#2e2e2e;-webkit-text-stroke:0.25px #2e2e2e;">Blue Island</div>
<div class="a" style="left:845.50px;top:359.27px;font-size:13.3px;color:#2e2e2e;-webkit-text-stroke:0.25px #2e2e2e;">IL</div>
<div class="a" style="left:905.50px;top:359.27px;font-size:13.3px;color:#2e2e2e;-webkit-text-stroke:0.25px #2e2e2e;">60406</div>
<div class="a" style="left:952.50px;top:359.27px;font-size:13.3px;color:#2e2e2e;-webkit-text-stroke:0.25px #2e2e2e;">708-555-1881</div>
<div class="a" style="left:231.92px;top:378.61px;font-size:13.3px;color:#2e2e2e;-webkit-text-stroke:0.25px #2e2e2e;">1059</div>
<div class="a" style="left:265.50px;top:378.61px;font-size:13.3px;color:#2e2e2e;-webkit-text-stroke:0.25px #2e2e2e;">Jerome</div>
<div class="a" style="left:435.00px;top:378.61px;font-size:13.3px;color:#2e2e2e;-webkit-text-stroke:0.25px #2e2e2e;">Keller</div>
<div class="a" style="left:589.50px;top:378.61px;font-size:13.3px;color:#2e2e2e;-webkit-text-stroke:0.25px #2e2e2e;">1241 E Orange Drive</div>
<div class="a" style="left:728.00px;top:378.61px;font-size:13.3px;color:#2e2e2e;-webkit-text-stroke:0.25px #2e2e2e;">New Lenox</div>
<div class="a" style="left:845.50px;top:378.61px;font-size:13.3px;color:#2e2e2e;-webkit-text-stroke:0.25px #2e2e2e;">IL</div>
<div class="a" style="left:905.50px;top:378.61px;font-size:13.3px;color:#2e2e2e;-webkit-text-stroke:0.25px #2e2e2e;">60451</div>
<div class="a" style="left:952.50px;top:378.61px;font-size:13.3px;color:#2e2e2e;-webkit-text-stroke:0.25px #2e2e2e;">815-555-1021</div>
<div class="a" style="left:231.92px;top:397.94px;font-size:13.3px;color:#2e2e2e;-webkit-text-stroke:0.25px #2e2e2e;">1066</div>
<div class="a" style="left:265.50px;top:397.94px;font-size:13.3px;color:#2e2e2e;-webkit-text-stroke:0.25px #2e2e2e;">Rose</div>
<div class="a" style="left:435.00px;top:397.94px;font-size:13.3px;color:#2e2e2e;-webkit-text-stroke:0.25px #2e2e2e;">Callahan</div>
<div class="a" style="left:589.50px;top:397.94px;font-size:13.3px;color:#2e2e2e;-webkit-text-stroke:0.25px #2e2e2e;">2363 Window Drive</div>
<div class="a" style="left:728.00px;top:397.94px;font-size:13.3px;color:#2e2e2e;-webkit-text-stroke:0.25px #2e2e2e;">Trona</div>
<div class="a" style="left:845.50px;top:397.94px;font-size:13.3px;color:#2e2e2e;-webkit-text-stroke:0.25px #2e2e2e;">CA</div>
<div class="a" style="left:905.50px;top:397.94px;font-size:13.3px;color:#2e2e2e;-webkit-text-stroke:0.25px #2e2e2e;">93562</div>
<div class="a" style="left:952.50px;top:397.94px;font-size:13.3px;color:#2e2e2e;-webkit-text-stroke:0.25px #2e2e2e;">760-555-1221</div>
<div class="a" style="left:231.92px;top:417.27px;font-size:13.3px;color:#2e2e2e;-webkit-text-stroke:0.25px #2e2e2e;">1071</div>
<div class="a" style="left:265.50px;top:417.27px;font-size:13.3px;color:#2e2e2e;-webkit-text-stroke:0.25px #2e2e2e;">Ken</div>
<div class="a" style="left:435.00px;top:417.27px;font-size:13.3px;color:#2e2e2e;-webkit-text-stroke:0.25px #2e2e2e;">Dedarian</div>
<div class="a" style="left:589.50px;top:417.27px;font-size:13.3px;color:#2e2e2e;-webkit-text-stroke:0.25px #2e2e2e;">9234 E El Dorado</div>
<div class="a" style="left:728.00px;top:417.27px;font-size:13.3px;color:#2e2e2e;-webkit-text-stroke:0.25px #2e2e2e;">Olympia</div>
<div class="a" style="left:845.50px;top:417.27px;font-size:13.3px;color:#2e2e2e;-webkit-text-stroke:0.25px #2e2e2e;">WA</div>
<div class="a" style="left:905.50px;top:417.27px;font-size:13.3px;color:#2e2e2e;-webkit-text-stroke:0.25px #2e2e2e;">98501</div>
<div class="a" style="left:952.50px;top:417.27px;font-size:13.3px;color:#2e2e2e;-webkit-text-stroke:0.25px #2e2e2e;">360-555-4853</div>
<div class="a" style="left:231.92px;top:436.60px;font-size:13.3px;color:#2e2e2e;-webkit-text-stroke:0.25px #2e2e2e;">1074</div>
<div class="a" style="left:265.50px;top:436.60px;font-size:13.3px;color:#2e2e2e;-webkit-text-stroke:0.25px #2e2e2e;">Kim</div>
<div class="a" style="left:435.00px;top:436.60px;font-size:13.3px;color:#2e2e2e;-webkit-text-stroke:0.25px #2e2e2e;">Park</div>
<div class="a" style="left:589.50px;top:436.60px;font-size:13.3px;color:#2e2e2e;-webkit-text-stroke:0.25px #2e2e2e;">123 E 33rd Street</div>
<div class="a" style="left:728.00px;top:436.60px;font-size:13.3px;color:#2e2e2e;-webkit-text-stroke:0.25px #2e2e2e;">Lincoln</div>
<div class="a" style="left:845.50px;top:436.60px;font-size:13.3px;color:#2e2e2e;-webkit-text-stroke:0.25px #2e2e2e;">NE</div>
<div class="a" style="left:905.50px;top:436.60px;font-size:13.3px;color:#2e2e2e;-webkit-text-stroke:0.25px #2e2e2e;">68501</div>
<div class="a" style="left:952.50px;top:436.60px;font-size:13.3px;color:#2e2e2e;-webkit-text-stroke:0.25px #2e2e2e;">402-555-0720</div>
<div class="a" style="left:231.92px;top:455.94px;font-size:13.3px;color:#2e2e2e;-webkit-text-stroke:0.25px #2e2e2e;">1079</div>
<div class="a" style="left:265.50px;top:455.94px;font-size:13.3px;color:#2e2e2e;-webkit-text-stroke:0.25px #2e2e2e;">Terry</div>
<div class="a" style="left:435.00px;top:455.94px;font-size:13.3px;color:#2e2e2e;-webkit-text-stroke:0.25px #2e2e2e;">Lawrence</div>
<div class="a" style="left:589.50px;top:455.94px;font-size:13.3px;color:#2e2e2e;-webkit-text-stroke:0.25px #2e2e2e;">89 Boulder Drive</div>
<div class="a" style="left:728.00px;top:455.94px;font-size:13.3px;color:#2e2e2e;-webkit-text-stroke:0.25px #2e2e2e;">Oxford</div>
<div class="a" style="left:845.50px;top:455.94px;font-size:13.3px;color:#2e2e2e;-webkit-text-stroke:0.25px #2e2e2e;">AL</div>
<div class="a" style="left:905.50px;top:455.94px;font-size:13.3px;color:#2e2e2e;-webkit-text-stroke:0.25px #2e2e2e;">36203</div>
<div class="a" style="left:952.50px;top:455.94px;font-size:13.3px;color:#2e2e2e;-webkit-text-stroke:0.25px #2e2e2e;">256-555-0219</div>
<svg class="a" style="left:523px;top:222.5px" width="9" height="17" viewBox="0 0 9 17"><path d="M0.5 1H3.3Q4.5 1 4.5 2.3V14.7Q4.5 16 3.3 16H0.5M8.5 1H5.7Q4.5 1 4.5 2.3M4.5 14.7Q4.5 16 5.7 16H8.5" fill="none" stroke="#111" stroke-width="1.4"/></svg>
<div class="a" style="left:431.5px;top:200px;width:155px;height:20px;background:#a4293b;"></div>
<div class="a" style="left:261.5px;top:200px;width:1px;height:20px;background:#9a9a9a;"></div>
<div class="a" style="left:430.5px;top:200px;width:1px;height:20px;background:#9a9a9a;"></div>
<div class="a" style="left:585.5px;top:200px;width:1px;height:20px;background:#9a9a9a;"></div>
<div class="a" style="left:724px;top:200px;width:1px;height:20px;background:#9a9a9a;"></div>
<div class="a" style="left:841.5px;top:200px;width:1px;height:20px;background:#9a9a9a;"></div>
<div class="a" style="left:901.5px;top:200px;width:1px;height:20px;background:#9a9a9a;"></div>
<div class="a" style="left:949px;top:200px;width:1px;height:20px;background:#9a9a9a;"></div>
<div class="a" style="left:1041.5px;top:200px;width:1px;height:20px;background:#9a9a9a;"></div>
<div class="a" style="left:1134.3px;top:200px;width:1px;height:20px;background:#9a9a9a;"></div>
<div class="a" style="left:1230.3px;top:200px;width:1px;height:20px;background:#9a9a9a;"></div>
<div class="a" style="left:169.53px;top:204.24px;font-size:13.3px;color:#f4f4f4;-webkit-text-stroke:0.1px #f4f4f4;">CustomerID</div>
<svg class="a" style="left:250.0px;top:209px" width="9" height="5.5" viewBox="0 0 9 5.5"><path d="M0.7 0.6H8.3L4.5 4.9Z" fill="#555" stroke="#eeeeee" stroke-width="1"/></svg>
<div class="a" style="left:276.82px;top:204.24px;font-size:13.3px;color:#f4f4f4;-webkit-text-stroke:0.1px #f4f4f4;">Customer First Name</div>
<svg class="a" style="left:419.0px;top:209px" width="9" height="5.5" viewBox="0 0 9 5.5"><path d="M0.7 0.6H8.3L4.5 4.9Z" fill="#555" stroke="#eeeeee" stroke-width="1"/></svg>
<div class="a" style="left:439.18px;top:204.24px;font-size:13.3px;color:#f4f4f4;-webkit-text-stroke:0.1px #f4f4f4;">Customer Last Name</div>
<svg class="a" style="left:574.0px;top:209px" width="9" height="5.5" viewBox="0 0 9 5.5"><path d="M0.7 0.6H8.3L4.5 4.9Z" fill="#555" stroke="#eeeeee" stroke-width="1"/></svg>
<div class="a" style="left:631.01px;top:204.24px;font-size:13.3px;color:#f4f4f4;-webkit-text-stroke:0.1px #f4f4f4;">Street</div>
<svg class="a" style="left:712.5px;top:209px" width="9" height="5.5" viewBox="0 0 9 5.5"><path d="M0.7 0.6H8.3L4.5 4.9Z" fill="#555" stroke="#eeeeee" stroke-width="1"/></svg>
<div class="a" style="left:765.30px;top:204.24px;font-size:13.3px;color:#f4f4f4;-webkit-text-stroke:0.1px #f4f4f4;">City</div>
<svg class="a" style="left:830.0px;top:209px" width="9" height="5.5" viewBox="0 0 9 5.5"><path d="M0.7 0.6H8.3L4.5 4.9Z" fill="#555" stroke="#eeeeee" stroke-width="1"/></svg>
<div class="a" style="left:849.97px;top:204.24px;font-size:13.3px;color:#f4f4f4;-webkit-text-stroke:0.1px #f4f4f4;">State</div>
<svg class="a" style="left:890.0px;top:209px" width="9" height="5.5" viewBox="0 0 9 5.5"><path d="M0.7 0.6H8.3L4.5 4.9Z" fill="#555" stroke="#eeeeee" stroke-width="1"/></svg>
<div class="a" style="left:908.91px;top:204.24px;font-size:13.3px;color:#f4f4f4;-webkit-text-stroke:0.1px #f4f4f4;">ZIP</div>
<svg class="a" style="left:937.5px;top:209px" width="9" height="5.5" viewBox="0 0 9 5.5"><path d="M0.7 0.6H8.3L4.5 4.9Z" fill="#555" stroke="#eeeeee" stroke-width="1"/></svg>
<div class="a" style="left:970.02px;top:204.24px;font-size:13.3px;color:#f4f4f4;-webkit-text-stroke:0.1px #f4f4f4;">Phone</div>
<svg class="a" style="left:1030.0px;top:209px" width="9" height="5.5" viewBox="0 0 9 5.5"><path d="M0.7 0.6H8.3L4.5 4.9Z" fill="#555" stroke="#eeeeee" stroke-width="1"/></svg>
<div class="a" style="left:1045.00px;top:204.24px;font-size:13.3px;color:#f4f4f4;-webkit-text-stroke:0.1px #f4f4f4;font-style:italic;">Click to Add</div>
<svg class="a" style="left:1122.8px;top:209px" width="9" height="5.5" viewBox="0 0 9 5.5"><path d="M0.7 0.6H8.3L4.5 4.9Z" fill="#555" stroke="#eeeeee" stroke-width="1"/></svg>
<div class="a" style="left:143.75px;top:220px;width:17.75px;height:413px;background:#6c6c6c;"></div>
<div class="a" style="left:143.75px;top:238.33px;width:17.75px;height:1.2px;background:#c4c4c4;"></div>
<div class="a" style="left:143.75px;top:257.67px;width:17.75px;height:1.2px;background:#c4c4c4;"></div>
<div class="a" style="left:143.75px;top:277.0px;width:17.75px;height:1.2px;background:#c4c4c4;"></div>
<div class="a" style="left:143.75px;top:296.33px;width:17.75px;height:1.2px;background:#c4c4c4;"></div>
<div class="a" style="left:143.75px;top:315.66px;width:17.75px;height:1.2px;background:#c4c4c4;"></div>
<div class="a" style="left:143.75px;top:335.0px;width:17.75px;height:1.2px;background:#c4c4c4;"></div>
<div class="a" style="left:143.75px;top:354.33px;width:17.75px;height:1.2px;background:#c4c4c4;"></div>
<div class="a" style="left:143.75px;top:373.66px;width:17.75px;height:1.2px;background:#c4c4c4;"></div>
<div class="a" style="left:143.75px;top:393.0px;width:17.75px;height:1.2px;background:#c4c4c4;"></div>
<div class="a" style="left:143.75px;top:412.33px;width:17.75px;height:1.2px;background:#c4c4c4;"></div>
<div class="a" style="left:143.75px;top:431.66px;width:17.75px;height:1.2px;background:#c4c4c4;"></div>
<div class="a" style="left:143.75px;top:451.0px;width:17.75px;height:1.2px;background:#c4c4c4;"></div>
<div class="a" style="left:143.75px;top:470.33px;width:17.75px;height:1.2px;background:#c4c4c4;"></div>
<div class="a" style="left:143.75px;top:489.66px;width:17.75px;height:1.2px;background:#c4c4c4;"></div>
<div class="a" style="left:143.75px;top:509.0px;width:17.75px;height:1.2px;background:#c4c4c4;"></div>
<div class="a" style="left:143.75px;top:528.33px;width:17.75px;height:1.2px;background:#c4c4c4;"></div>
<div class="a" style="left:143.75px;top:547.66px;width:17.75px;height:1.2px;background:#c4c4c4;"></div>
<div class="a" style="left:143.75px;top:566.99px;width:17.75px;height:1.2px;background:#c4c4c4;"></div>
<div class="a" style="left:143.75px;top:586.33px;width:17.75px;height:1.2px;background:#c4c4c4;"></div>
<div class="a" style="left:143.75px;top:605.66px;width:17.75px;height:1.2px;background:#c4c4c4;"></div>
<div class="a" style="left:143.75px;top:624.99px;width:17.75px;height:1.2px;background:#c4c4c4;"></div>
<div class="a" style="left:143.75px;top:220px;width:17.75px;height:19.3px;background:#b82c40;"></div>
<svg class="a" style="left:146.5px;top:476px" width="10" height="10" viewBox="0 0 10 10"><path d="M5 0.5V9.5M0.5 5H9.5M1.8 1.8L8.2 8.2M8.2 1.8L1.8 8.2" stroke="#f4f4f4" stroke-width="1.3"/></svg>
<div class="a" style="left:138px;top:633px;width:1142px;height:17px;background:#565656;"></div>
<div class="a" style="left:138px;top:633px;width:6px;height:17px;background:#8c8c8c;"></div>
<div class="a" style="left:147.70px;top:637.59px;font-size:9.94px;color:#ececec;-webkit-text-stroke:0.12px #ececec;">Record:</div>
<svg class="a" style="left:188px;top:638px" width="8" height="8" viewBox="0 0 8 8"><path d="M0.8 0V8" stroke="#f0f0f0" stroke-width="1.3"/><path d="M7.5 0.5L2.5 4L7.5 7.5Z" fill="#f0f0f0"/></svg>
<svg class="a" style="left:205px;top:638px" width="6" height="8" viewBox="0 0 6 8"><path d="M5.5 0.5L0.5 4L5.5 7.5Z" fill="#777"/></svg>
<div class="a" style="left:216.5px;top:634.5px;width:48.5px;height:15px;background:#c8c8c8;"></div>
<div class="a" style="left:218.00px;top:637.67px;font-size:10.2px;color:#7a7a7a;-webkit-text-stroke:0.25px #7a7a7a;">1 of 13</div>
<svg class="a" style="left:271.5px;top:638px" width="6" height="8" viewBox="0 0 6 8"><path d="M0.5 0.5L5.5 4L0.5 7.5Z" fill="#f0f0f0"/></svg>
<svg class="a" style="left:288.5px;top:638px" width="8" height="8" viewBox="0 0 8 8"><path d="M0.5 0.5L5.5 4L0.5 7.5Z" fill="#f0f0f0"/><path d="M7.2 0V8" stroke="#f0f0f0" stroke-width="1.3"/></svg>
<svg class="a" style="left:304.5px;top:637px" width="13" height="9" viewBox="0 0 13 9"><path d="M0.5 1.5L5 4.5L0.5 7.5Z" fill="#f0f0f0"/><path d="M9.5 0.5V8.5M5.8 4.5H13.2M6.8 1.5L12.2 7.5M12.2 1.5L6.8 7.5" stroke="#f0f0f0" stroke-width="1"/></svg>
<div class="a" style="left:320px;top:633px;width:2px;height:17px;background:#8a8a8a;"></div>
<div class="a" style="left:323px;top:633px;width:75.3px;height:17px;background:#4c4c4c;"></div>
<svg class="a" style="left:329px;top:636px" width="15" height="14" viewBox="0 0 15 14"><path d="M0.5 0.5H14.5L9 6.5V13L6 11V6.5Z" fill="#8a8a8a"/><path d="M6 9L13 14M13 9L6 14" stroke="#6a6a6a" stroke-width="1"/></svg>
<div class="a" style="left:349.40px;top:637.40px;font-size:10.51px;color:#777777;-webkit-text-stroke:0.25px #777777;">No Filter</div>
<div class="a" style="left:398.3px;top:633px;width:2px;height:17px;background:#8a8a8a;"></div>
<div class="a" style="left:404.4px;top:634.5px;width:69.4px;height:15px;background:#c8c8c8;"></div>
<div class="a" style="left:405.60px;top:638.12px;font-size:9.66px;color:#6a6a6a;-webkit-text-stroke:0.25px #6a6a6a;">Search</div>
<div class="a" style="left:0px;top:650px;width:1280px;height:22px;background:#303030;"></div>
<div class="a" style="left:11.70px;top:657.22px;font-size:10.14px;color:#ececec;-webkit-text-stroke:0.12px #ececec;">Datasheet View</div>
<div class="a" style="left:1133.90px;top:656.75px;font-size:10.46px;color:#ececec;-webkit-text-stroke:0.12px #ececec;">Num Lock</div>
<div class="a" style="left:1200px;top:650px;width:38px;height:22px;background:#333333;"></div>
<svg class="a" style="left:1211px;top:654px" width="16" height="15" viewBox="0 0 16 15"><rect x="0.6" y="0.6" width="14.8" height="13.8" fill="none" stroke="#f0f0f0" stroke-width="1.1"/><path d="M0.6 4H15.4M0.6 7.5H15.4M0.6 11H15.4M5.5 4V14.4M10.5 4V14.4" stroke="#f0f0f0" stroke-width="0.9"/><rect x="3" y="1.5" width="10" height="1.5" fill="#f0f0f0"/></svg>
<svg class="a" style="left:1250.5px;top:653.5px" width="17" height="17" viewBox="0 0 17 17"><path d="M0.7 0.7L16.3 16.3H0.7Z" fill="none" stroke="#f0f0f0" stroke-width="1.2"/><path d="M3.5 9L8.5 13.8H3.5Z" fill="none" stroke="#f0f0f0" stroke-width="1"/><path d="M10.5 0.7H16.3V16.3M10.5 0.7V7" fill="none" stroke="#f0f0f0" stroke-width="1.2"/><path d="M13.5 3.5H16.3M14 6.5H16.3M13.5 9.5H16.3M14 12.5H16.3" stroke="#f0f0f0" stroke-width="0.8"/></svg>
<div class="a" style="left:0px;top:672px;width:1280px;height:48px;background:linear-gradient(90deg,#c6ebef 0%,#cfe6ea 30%,#d3e6ea 50%,#cde6ea 75%,#c3ecf0 100%);"></div>
<svg class="a" style="left:20px;top:676px" width="28" height="32" viewBox="0 0 28 32"><path d="M2 23 Q10 26 16 19 Q19 16 19.5 12 Q24 17 21.5 23 Q18.5 30 11 30 Q5 29.5 2 23Z" fill="#f0a030"/><path d="M2 23 Q10 26 16 19 Q14 24 9 25.5 Q5 25.8 2 23Z" fill="#f7c660"/></svg>
<svg class="a" style="left:30px;top:678px" width="17" height="17" viewBox="0 0 17 17"><circle cx="8.2" cy="8.2" r="7.8" fill="#c4262e"/><text x="8.2" y="12.3" font-size="11" fill="#fff" text-anchor="middle" font-family="Liberation Sans">1</text></svg>
<div class="a" style="left:51.30px;top:683.17px;font-size:10.43px;color:#1f3a40;-webkit-text-stroke:0.12px #1f3a40;">5°C</div>
<div class="a" style="left:51.30px;top:699.09px;font-size:10.88px;color:#2e5a62;-webkit-text-stroke:0.12px #2e5a62;">Clear</div>
<svg class="a" style="left:363.5px;top:684.5px" width="24" height="24" viewBox="0 0 24 24"><rect x="0" y="0" width="11.4" height="11.4" fill="#1a90d8"/><rect x="12.6" y="0" width="11.4" height="11.4" fill="#1a90d8"/><rect x="0" y="12.6" width="11.4" height="11.4" fill="#1683cc"/><rect x="12.6" y="12.6" width="11.4" height="11.4" fill="#1683cc"/></svg>
<svg class="a" style="left:408.4px;top:683.8px" width="25" height="25" viewBox="0 0 25 25"><defs><linearGradient id="eg" x1="0.1" y1="0.9" x2="0.9" y2="0.15"><stop offset="0" stop-color="#0b4f9e"/><stop offset="0.4" stop-color="#1670c4"/><stop offset="0.65" stop-color="#22a8c8"/><stop offset="1" stop-color="#6ee87a"/></linearGradient></defs><path d="M22.2 19.3 A12 12 0 1 1 24.3 11 Q24.4 16.5 19 17.2 Q15.5 17.6 14.5 15.5 Q16 19.5 20 19.8 Z" fill="url(#eg)"/><path d="M2 13 Q4 6 11 6.5 Q15 7.2 16 10.5 Q13 8.5 10.5 10 Q8.5 11.5 9.5 15 Q10.5 19 15.5 20.8 Q19.5 21.8 22.2 19.3 Q19 24.5 12.5 24.3 Q3.5 23.5 2 13Z" fill="#0c4f9a" opacity="0.85"/><ellipse cx="12.4" cy="12.6" rx="2.6" ry="2.2" fill="#d4ecf2"/></svg>
<svg class="a" style="left:452.5px;top:684.5px" width="25" height="23" viewBox="0 0 25 23"><path d="M0 2 Q0 0 2 0 H8.5 L10.5 2.2 H23 Q25 2.2 25 4.2 V21 Q25 23 23 23 H2 Q0 23 0 21Z" fill="#d99a12"/><rect x="0" y="4.2" width="25" height="18.8" rx="1.5" fill="#f6cf3c"/><path d="M4.5 22 V16.5 Q4.5 14.5 6.5 14.5 H18.5 Q20.5 14.5 20.5 16.5 V22Z" fill="#1a6ec0"/><rect x="7" y="17.5" width="11" height="1.2" fill="#4a9ae0"/></svg>
<div class="a" style="left:462px;top:712.5px;width:6px;height:2.5px;background:#6a7a80;border-radius:1.5px"></div>
<div class="a" style="left:489.4px;top:676.6px;width:38.6px;height:38.4px;background:#f3dde2;border-radius:4px"></div>
<svg class="a" style="left:496.5px;top:684px" width="24" height="23" viewBox="0 0 24 23"><rect x="6" y="0" width="18" height="23" rx="2" fill="#1a6fc4"/><rect x="13" y="0" width="11" height="11" fill="#28a8ea"/><path d="M6 11 H24 V21 Q24 23 22 23 H8 Q6 23 6 21Z" fill="#0f5aa8"/><rect x="0" y="5" width="13" height="13" rx="1.5" fill="#0b4e96"/><text x="6.5" y="15.3" font-size="10" font-weight="bold" fill="#fff" text-anchor="middle" font-family="Liberation Sans">o</text></svg>
<div class="a" style="left:507px;top:712.5px;width:6px;height:2.5px;background:#c42b3a;border-radius:1.5px"></div>
<svg class="a" style="left:541px;top:684px" width="24" height="24" viewBox="0 0 24 24"><rect x="1" y="1" width="13" height="13" fill="none" stroke="#d03838" stroke-width="2" stroke-dasharray="2.5 1.5"/><path d="M6 3 L17 17 M18 3 L8 17" stroke="#6e6e6e" stroke-width="1.8"/><circle cx="8" cy="20" r="3" fill="none" stroke="#1a8ed8" stroke-width="1.8"/><circle cx="20" cy="15" r="3" fill="none" stroke="#1a8ed8" stroke-width="1.8"/></svg>
<svg class="a" style="left:585.5px;top:685px" width="21" height="21" viewBox="0 0 21 21"><circle cx="10.5" cy="10.5" r="10.5" fill="#dcd7d9"/><path d="M6 17 Q4 10 8 6 Q11.5 3.5 14 6.5 Q16.5 10 15.5 17 M7 12 Q11 9.5 14.5 11" fill="none" stroke="#d23a3a" stroke-width="1.8"/></svg>
<svg class="a" style="left:628.75px;top:683.75px" width="25" height="24" viewBox="0 0 25 24"><circle cx="12" cy="12" r="11.8" fill="#e33b2e"/><path d="M12 12 L1.8 6 A11.8 11.8 0 0 0 12 23.8Z" fill="#2aa34a"/><path d="M12 12 L12 23.8 A11.8 11.8 0 0 0 22.2 6Z" fill="#f7c21b"/><circle cx="12" cy="12" r="5.5" fill="#fff"/><circle cx="12" cy="12" r="4.3" fill="#1a73e8"/></svg>
<svg class="a" style="left:643px;top:678.75px" width="15" height="16" viewBox="0 0 15 16"><circle cx="7.5" cy="8" r="7.5" fill="#1e4a3a"/><path d="M3 6 Q7 2 12 5 L10 14 Q5 14 3 11Z" fill="#2c6a50"/></svg>
<div class="a" style="left:640px;top:712.5px;width:6px;height:2.5px;background:#6f7f84;border-radius:1.5px"></div>
<svg class="a" style="left:672.5px;top:684px" width="24" height="24" viewBox="0 0 24 24"><path d="M12 1.5 A10.5 10.5 0 1 1 5 20 L1.5 22.5 L3 18.5 A10.5 10.5 0 0 1 12 1.5Z" fill="none" stroke="#22a84e" stroke-width="2.2"/><path d="M8 7 Q7 9 9 12.5 Q12 16 15 16.5 L16.5 15 L14.5 13.5 L13 14.5 Q10.5 13 9.5 10.5 L10.5 9 L9.5 7Z" fill="#22a84e"/></svg>
<svg class="a" style="left:683.75px;top:680.5px" width="20" height="13.5" viewBox="0 0 20 13.5"><rect x="0" y="0" width="20" height="13.5" rx="6.75" fill="#1f7fd8"/><text x="10" y="10.8" font-size="11" fill="#fff" text-anchor="middle" font-family="Liberation Sans">27</text></svg>
<div class="a" style="left:682px;top:712.5px;width:6px;height:2.5px;background:#6f7f84;border-radius:1.5px"></div>
<svg class="a" style="left:717px;top:683px" width="24" height="24" viewBox="0 0 24 24"><circle cx="12" cy="12" r="12" fill="#dc1e3c"/><path d="M7 15 Q4.5 11 8 7.5 L11 5 M17 9 Q19.5 13 16 16.5 L13 19 M8.5 11 L12.5 7.5 Q14.5 6 15.5 8 M15.5 13 L11.5 16.5 Q9.5 18 8.5 16" fill="none" stroke="#fff" stroke-width="1.7"/></svg>
<svg class="a" style="left:760.5px;top:683px" width="26" height="25" viewBox="0 0 26 25"><circle cx="19" cy="5" r="3.5" fill="#7b83eb"/><rect x="13" y="9" width="12" height="11" rx="3" fill="#7b83eb"/><circle cx="13" cy="4.5" r="4" fill="#5b5fc7"/><rect x="5" y="9" width="14" height="13" rx="2" fill="#5b5fc7"/><rect x="0" y="5.5" width="12" height="12" rx="1.5" fill="#464eb8"/><text x="6" y="15" font-size="9.5" font-weight="bold" fill="#fff" text-anchor="middle" font-family="Liberation Sans">T</text><rect x="8" y="18" width="17" height="6.5" rx="1.5" fill="#2ad5c0"/><text x="16.5" y="23.5" font-size="6" font-weight="bold" fill="#1a3a50" text-anchor="middle" font-family="Liberation Sans">NEW</text></svg>
<svg class="a" style="left:774.5px;top:679.5px" width="15.5" height="15.5" viewBox="0 0 15.5 15.5"><circle cx="7.75" cy="7.75" r="7.75" fill="#c4262e"/><text x="7.75" y="12" font-size="11" fill="#fff" text-anchor="middle" font-family="Liberation Sans">7</text></svg>
<div class="a" style="left:770px;top:712.5px;width:6px;height:2.5px;background:#6f7f84;border-radius:1.5px"></div>
<svg class="a" style="left:804.5px;top:684px" width="24" height="23" viewBox="0 0 24 23"><rect x="6" y="0" width="18" height="23" rx="2" fill="#21a366"/><rect x="6" y="0" width="18" height="6" fill="#33c481"/><rect x="6" y="11" width="18" height="6" fill="#107c41"/><rect x="6" y="17" width="18" height="6" fill="#185c37"/><rect x="0" y="5" width="13" height="13" rx="1.5" fill="#107c41"/><text x="6.5" y="15.3" font-size="10" font-weight="bold" fill="#fff" text-anchor="middle" font-family="Liberation Sans">X</text></svg>
<div class="a" style="left:814px;top:712.5px;width:6px;height:2.5px;background:#6f7f84;border-radius:1.5px"></div>
<svg class="a" style="left:848.75px;top:684px" width="24" height="23" viewBox="0 0 24 23"><rect x="6" y="0" width="18" height="23" rx="2" fill="#2b7cd3"/><rect x="6" y="0" width="18" height="6" fill="#41a5ee"/><rect x="6" y="11" width="18" height="6" fill="#185abd"/><rect x="6" y="17" width="18" height="6" fill="#103f91"/><rect x="0" y="5" width="13" height="13" rx="1.5" fill="#185abd"/><text x="6.5" y="15.3" font-size="10" font-weight="bold" fill="#fff" text-anchor="middle" font-family="Liberation Sans">W</text></svg>
<div class="a" style="left:858px;top:712.5px;width:6px;height:2.5px;background:#6f7f84;border-radius:1.5px"></div>
<div class="a" style="left:886px;top:676.5px;width:33.5px;height:39.5px;background:#e2eef1;border-radius:4px"></div>
<svg class="a" style="left:892.5px;top:684px" width="24" height="24" viewBox="0 0 24 24"><path d="M5 4 Q5 0 14.5 0 Q24 0 24 4 V20 Q24 24 14.5 24 Q5 24 5 20Z" fill="#a4262c"/><ellipse cx="14.5" cy="4" rx="9.5" ry="3.8" fill="#e06178"/><path d="M5 10 Q14.5 14 24 10 V14 Q14.5 18 5 14Z" fill="#c4314b"/><rect x="0" y="6" width="13" height="13" rx="1.5" fill="#8a1a24"/><text x="6.5" y="16.3" font-size="10" font-weight="bold" fill="#fff" text-anchor="middle" font-family="Liberation Sans">A</text></svg>
<div class="a" style="left:897px;top:712.5px;width:15.5px;height:2.5px;background:#1f6fc8;border-radius:1.5px"></div>
<svg class="a" style="left:1001px;top:690px" width="11" height="7" viewBox="0 0 11 7"><path d="M0.8 6L5.5 1.3L10.2 6" fill="none" stroke="#1f1f1f" stroke-width="1.3"/></svg>
<svg class="a" style="left:1029.5px;top:690px" width="17" height="12" viewBox="0 0 17 12"><path d="M3.5 11.5 Q0.5 11.5 0.5 8.5 Q0.5 5.5 3.5 5.5 Q4.5 1 9 1 Q13 1 14 5 Q16.5 5.5 16.5 8.5 Q16.5 11.5 13.5 11.5Z" fill="#9aa3a6" stroke="#2a2a2a" stroke-width="1"/></svg>
<svg class="a" style="left:1063.5px;top:687.5px" width="13" height="17" viewBox="0 0 13 17"><rect x="3.5" y="0.7" width="6" height="10" rx="3" fill="none" stroke="#3a7bd5" stroke-width="1.3"/><path d="M1 7.5 Q1 13 6.5 13 Q12 13 12 7.5M6.5 13V16.5" fill="none" stroke="#3a7bd5" stroke-width="1.3"/></svg>
<svg class="a" style="left:1093.5px;top:688px" width="17" height="13" viewBox="0 0 17 13"><path d="M0.8 4.5 Q8.5 -2 16.2 4.5M3.3 7 Q8.5 2.5 13.7 7M5.8 9.5 Q8.5 7 11.2 9.5" fill="none" stroke="#1f1f1f" stroke-width="1.3"/><circle cx="8.5" cy="11.8" r="1.2" fill="#1f1f1f"/></svg>
<svg class="a" style="left:1117.5px;top:688px" width="17" height="14" viewBox="0 0 17 14"><path d="M0.7 4.5H4L8 1V13L4 9.5H0.7Z" fill="none" stroke="#1f1f1f" stroke-width="1.2"/><path d="M11 4 Q13 7 11 10M13.5 2 Q16.5 7 13.5 12" fill="none" stroke="#9aa3a6" stroke-width="1.1"/></svg>
<svg class="a" style="left:1141.5px;top:688px" width="17" height="14" viewBox="0 0 17 14"><rect x="0.7" y="4" width="14" height="9" rx="1.5" fill="#1f1f1f"/><rect x="15" y="6.5" width="1.8" height="4" fill="#1f1f1f"/><path d="M6 0 L3 6 H7 L4.5 11" fill="none" stroke="#e8f0f0" stroke-width="1"/></svg>
<div class="a" style="left:1193.60px;top:682.59px;font-size:11.47px;color:#1a1a1a;-webkit-text-stroke:0.12px #1a1a1a;">7:01 PM</div>
<div class="a" style="left:1175.00px;top:698.15px;font-size:11.99px;color:#1a1a1a;-webkit-text-stroke:0.12px #1a1a1a;">2024-03-07</div>
<svg class="a" style="left:1245.5px;top:688.5px" width="14" height="15" viewBox="0 0 14 15"><path d="M2 11 V6.5 Q2 1 7 1 Q12 1 12 6.5 V11 L13.3 12.3 H0.7Z" fill="none" stroke="#1f1f1f" stroke-width="1.2"/><path d="M5 13.5 Q7 15.5 9 13.5" fill="none" stroke="#1f1f1f" stroke-width="1.2"/></svg>
</body></html>
